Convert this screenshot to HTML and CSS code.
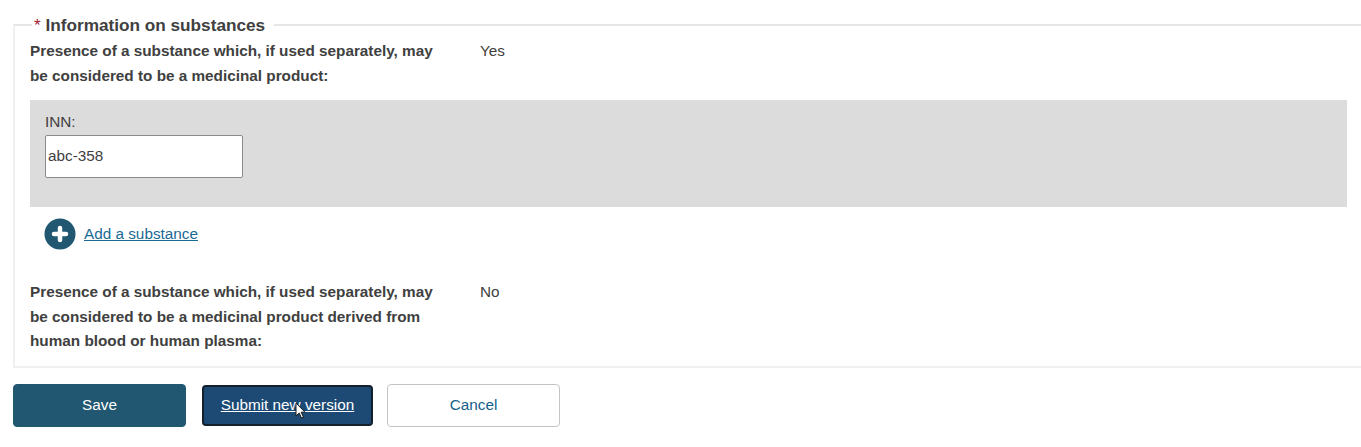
FILE: index.html
```html
<!DOCTYPE html>
<html lang="en">
<head>
<meta charset="utf-8">
<title>Information on substances</title>
<link rel="stylesheet" href="styles.css">
</head>
<body>
<main class="page">
  <fieldset class="panel">
    <legend class="panel-title"><span class="req">*</span> Information on substances</legend>
    <div class="field">
      <div class="field-label">Presence of a substance which, if used separately, may be considered to be a medicinal product:</div>
      <div class="field-value">Yes</div>
    </div>
    <div class="subform">
      <label class="inn-label" for="inn">INN:</label>
      <input class="inn-input" id="inn" type="text" value="abc-358">
    </div>
    <div class="add-row">
      <svg class="add-icon" viewBox="0 0 32 32" width="32" height="32" aria-hidden="true">
        <circle cx="16" cy="16" r="15.5" fill="#215770"/>
        <path d="M16 10v12M10 16h12" stroke="#fff" stroke-width="4.5" stroke-linecap="round"/>
      </svg>
      <a class="add-link" href="#">Add a substance</a>
    </div>
    <div class="field field-second">
      <div class="field-label">Presence of a substance which, if used separately, may be considered to be a medicinal product derived from human blood or human plasma:</div>
      <div class="field-value">No</div>
    </div>
  </fieldset>
  <div class="actions">
    <button class="btn btn-save" type="button">Save</button>
    <span class="submit-wrap">
      <button class="btn btn-submit" type="button">Submit new version</button>
      <svg class="cursor" viewBox="0 0 12 18" width="12" height="18" aria-hidden="true">
        <path d="M1 1v13l3.2-3 2.2 5 2-.9-2.2-4.9H10z" fill="#fff" stroke="#1a1a1a" stroke-width="1"/>
      </svg>
    </span>
    <button class="btn btn-cancel" type="button">Cancel</button>
  </div>
</main>
</body>
</html>
```
FILE: styles.css
```css
html, body {
  margin: 0;
  padding: 0;
  background: #fff;
  overflow: hidden;
}
body {
  font-family: "Liberation Sans", Arial, sans-serif;
  font-size: 15.3px;
  color: #404040;
}
.page {
  padding: 15px 0 0 13px;
}
.panel {
  margin: 0 -40px 0 0;
  padding: 0 0 0 15px;
  border: 0;
  border-top: 2px solid #e6e6e6;
  border-left: 2px solid #f0f0f0;
  border-bottom: 2px solid #f0f0f0;
  min-width: 0;
  height: 353px;
  box-sizing: border-box;
}
.panel-title {
  margin-left: 2px;
  padding: 0 9px 0 2px;
  font-size: 17.2px;
  font-weight: bold;
  line-height: 20px;
  color: #404040;
}
.req {
  color: #a02030;
  font-weight: normal;
}
.field {
  display: flex;
  padding-top: 4px;
  line-height: 24.5px;
}
.field-label {
  width: 450px;
  padding-right: 40px;
  box-sizing: border-box;
  font-weight: bold;
}
.subform {
  width: 1317px;
  height: 107px;
  margin-top: 11.5px;
  padding: 13px 15px 0;
  box-sizing: border-box;
  background: #dcdcdc;
}
.inn-label {
  display: block;
  line-height: 18px;
  margin-bottom: 4px;
}
.inn-input {
  display: block;
  width: 198px;
  height: 43px;
  padding: 0 2px;
  box-sizing: border-box;
  border: 1px solid #8a8a8a;
  border-radius: 2px;
  background: #fff;
  font: 15.3px "Liberation Sans", Arial, sans-serif;
  color: #404040;
}
.add-row {
  display: flex;
  align-items: center;
  gap: 8px;
  margin: 11px 0 0 14px;
}
.add-icon {
  display: block;
}
.add-link {
  color: #1a6a94;
  text-decoration: underline;
}
.field-second {
  margin-top: 26.5px;
}
.actions {
  display: flex;
  align-items: center;
  margin-top: 16px;
}
.btn {
  height: 43px;
  width: 173px;
  padding: 0 0 2px;
  border-radius: 4px;
  box-sizing: border-box;
  font: 15.3px "Liberation Sans", Arial, sans-serif;
  cursor: pointer;
}
.btn-save {
  background: #215770;
  border: 1px solid #215770;
  color: #fff;
}
.submit-wrap {
  position: relative;
  display: block;
  margin: 0 14px 0 16px;
}
.btn-submit {
  display: block;
  width: 171px;
  height: 41px;
  background: #1c4a75;
  border: 2px solid #14202c;
  color: #fff;
  text-decoration: underline;
}
.cursor {
  position: absolute;
  left: 93px;
  top: 17px;
}
.btn-cancel {
  background: #fff;
  border: 1px solid #c4c4c4;
  color: #15608a;
}
```
